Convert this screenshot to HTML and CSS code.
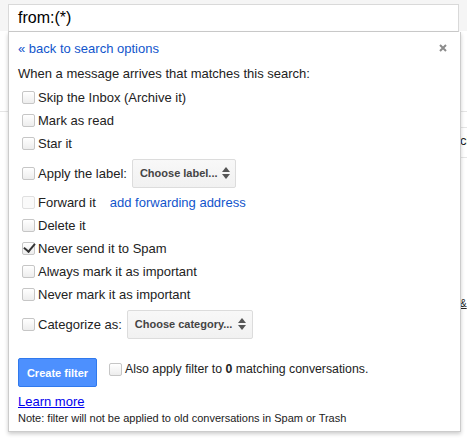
FILE: index.html
```html
<!DOCTYPE html>
<html lang="en">
<head>
    <meta charset="UTF-8">
    <title>Create filter</title>
    <link rel="stylesheet" href="styles.css">
</head>
<body>
    <div class="page">
        <div class="topbar"></div>
        <div class="behind">
            <div class="behind-row"></div>
            <div class="behind-row short"></div>
            <div class="behind-row text">ch</div>
            <div class="behind-gap"></div>
            <div class="behind-amp">&amp;</div>
        </div>
    </div>

    <div class="searchbox">from:(*)</div>

    <div class="panel">
        <div class="panel-head">
            <a class="back" href="#">« back to search options</a>
            <svg class="close" width="8" height="8" viewBox="0 0 8 8">
                <path d="M1 1 L7 7 M7 1 L1 7" stroke="#8c8c8c" stroke-width="2"/>
            </svg>
        </div>
        <div class="intro">When a message arrives that matches this search:</div>

        <div class="options">
            <label class="row"><input type="checkbox"> Skip the Inbox (Archive it)</label>
            <label class="row"><input type="checkbox"> Mark as read</label>
            <label class="row"><input type="checkbox"> Star it</label>
            <div class="row tall">
                <label><input type="checkbox"> Apply the label:</label>
                <div class="select label-select">Choose label... <span class="arrows"></span></div>
            </div>
            <div class="row">
                <label><input type="checkbox" disabled> Forward it</label>
                <a class="fwd" href="#">add forwarding address</a>
            </div>
            <label class="row"><input type="checkbox"> Delete it</label>
            <label class="row"><input type="checkbox" checked> Never send it to Spam</label>
            <label class="row"><input type="checkbox"> Always mark it as important</label>
            <label class="row"><input type="checkbox"> Never mark it as important</label>
            <div class="row tall">
                <label><input type="checkbox"> Categorize as:</label>
                <div class="select cat-select">Choose category... <span class="arrows"></span></div>
            </div>
        </div>

        <div class="actions">
            <button class="create">Create filter</button>
            <label class="also"><input type="checkbox"> <span>Also apply filter to <b>0</b> matching conversations.</span></label>
        </div>
        <a class="learn" href="#">Learn more</a>
        <div class="note">Note: filter will not be applied to old conversations in Spam or Trash</div>
    </div>
</body>
</html>
```

FILE: styles.css
```css
body {
    margin: 0;
    font-family: "Liberation Sans", Arial, sans-serif;
    color: #222;
    background: #fff;
    width: 467px;
    height: 441px;
    overflow: hidden;
    position: relative;
}
.page {
    width: 467px;
}
.topbar {
    height: 31px;
    background: #f5f5f5;
}
.behind {
    padding-top: 65px;
}
.behind-row {
    height: 15px;
    border-bottom: 1px solid #e5e5e5;
}
.behind-row.short {
    margin-left: 459px;
    height: 15px;
}
.behind-row.text {
    margin-left: 459px;
    height: 29px;
    line-height: 26px;
    font-size: 13px;
    padding-left: 1px;
    white-space: nowrap;
    overflow: hidden;
}
.behind-gap {
    height: 140px;
}
.behind-amp {
    margin-left: 460px;
    font-size: 10px;
    text-decoration: underline;
}

.searchbox {
    position: absolute;
    left: 8px;
    top: 4px;
    width: 440px;
    height: 26px;
    padding-left: 9px;
    border: 1px solid #d9d9d9;
    border-bottom-color: #ccc;
    background: #fff;
    font-size: 16px;
    line-height: 26px;
    color: #000;
}
.panel {
    position: absolute;
    left: 8px;
    top: 32px;
    width: 433px;
    height: 380px;
    padding: 7px 9px 12px 9px;
    background: #fff;
    border: 1px solid #ccc;
    border-top: none;
    box-shadow: 0 2px 4px rgba(0, 0, 0, 0.2);
    font-size: 13px;
}
.panel-head {
    display: flex;
    justify-content: space-between;
    align-items: center;
    height: 18px;
}
.back {
    color: #15c;
    text-decoration: none;
}
.close {
    margin-right: 4px;
}
.intro {
    margin-top: 9px;
    line-height: 16px;
}
.options {
    margin-top: 4px;
    display: flex;
    flex-direction: column;
}
.row {
    display: flex;
    align-items: center;
    height: 23px;
    padding-left: 4px;
}
.row.tall {
    height: 36px;
}
.row label {
    display: flex;
    align-items: center;
}
.row input,
.also input {
    -webkit-appearance: none;
    appearance: none;
    flex-shrink: 0;
    width: 13px;
    height: 13px;
    margin: 0 3px 0 0;
    border: 1px solid #c6c6c6;
    border-radius: 2px;
    background: linear-gradient(#fff, #ededed);
    position: relative;
}
.row input:checked::after {
    content: "";
    position: absolute;
    left: 3px;
    top: -2px;
    width: 5px;
    height: 9px;
    border: solid #333;
    border-width: 0 2px 2px 0;
    transform: rotate(40deg);
}
.row input:disabled {
    border-color: #e0e0e0;
    background: #fafafa;
}
.fwd {
    color: #15c;
    text-decoration: none;
    margin-left: 14px;
}
.select {
    display: flex;
    align-items: center;
    justify-content: space-between;
    flex-shrink: 0;
    white-space: nowrap;
    height: 29px;
    margin-left: 5px;
    padding: 0 6px 0 7px;
    box-sizing: border-box;
    border: 1px solid #dcdcdc;
    border-radius: 2px;
    background: linear-gradient(#f8f8f8, #f1f1f1);
    font-size: 11px;
    font-weight: bold;
    color: #444;
}
.label-select {
    width: 104px;
}
.cat-select {
    width: 126px;
}
.arrows {
    position: relative;
    width: 8px;
    height: 12px;
    margin-left: 4px;
}
.arrows::before,
.arrows::after {
    content: "";
    position: absolute;
    left: 0;
    border-left: 4px solid transparent;
    border-right: 4px solid transparent;
}
.arrows::before {
    top: 0;
    border-bottom: 5px solid #555;
}
.arrows::after {
    bottom: 0;
    border-top: 5px solid #555;
}
.actions {
    display: flex;
    align-items: flex-start;
    margin-top: 16px;
}
.create {
    flex-shrink: 0;
    width: 79px;
    height: 29px;
    background: #4d90fe;
    border: 1px solid #3079ed;
    border-radius: 2px;
    color: #fff;
    font-family: "Liberation Sans", Arial, sans-serif;
    font-size: 11px;
    font-weight: bold;
    padding: 0;
}
.also {
    display: flex;
    align-items: center;
    margin-left: 12px;
    margin-top: 4px;
    font-size: 12.3px;
}
.also input {
    margin-right: 3px;
}
.learn {
    display: block;
    margin-top: 7px;
    color: #00e;
    font-size: 13px;
    width: max-content;
}
.note {
    margin-top: 3px;
    font-size: 11px;
    color: #222;
}
```
